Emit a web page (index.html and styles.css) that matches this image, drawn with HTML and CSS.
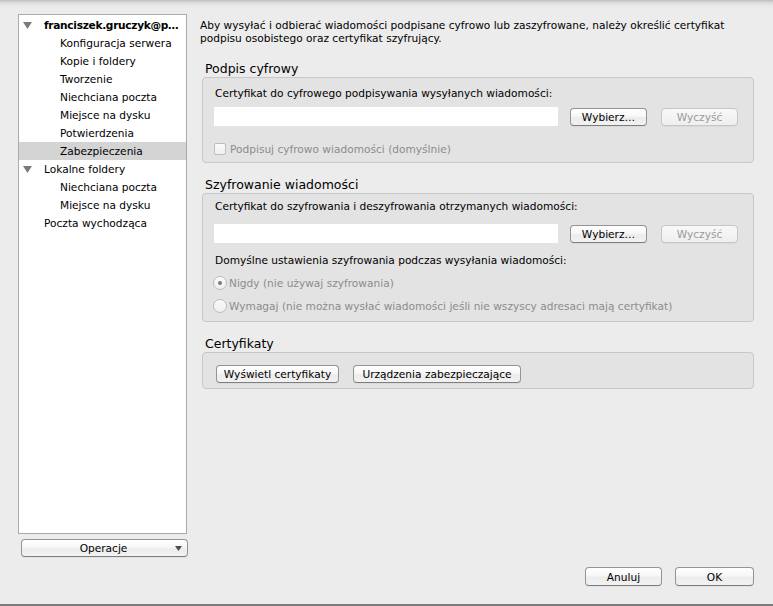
FILE: index.html
```html
<!DOCTYPE html>
<html lang="pl">
<head>
<meta charset="utf-8">
<title>Zabezpieczenia</title>
<link rel="stylesheet" href="styles.css">
</head>
<body>
<div class="window">
  <aside class="sidebar">
    <ul class="tree">
      <li class="row top strong"><svg class="disclosure" width="9" height="7" viewBox="0 0 9 7"><polygon points="0,0 9,0 4.5,7"/></svg><span>franciszek.gruczyk@p…</span></li>
      <li class="row child">Konfiguracja serwera</li>
      <li class="row child">Kopie i foldery</li>
      <li class="row child">Tworzenie</li>
      <li class="row child">Niechciana poczta</li>
      <li class="row child">Miejsce na dysku</li>
      <li class="row child">Potwierdzenia</li>
      <li class="row child selected">Zabezpieczenia</li>
      <li class="row top"><svg class="disclosure" width="9" height="7" viewBox="0 0 9 7"><polygon points="0,0 9,0 4.5,7"/></svg><span>Lokalne foldery</span></li>
      <li class="row child">Niechciana poczta</li>
      <li class="row child">Miejsce na dysku</li>
      <li class="row top noarrow">Poczta wychodząca</li>
    </ul>
    <button class="btn popup"><span class="popup-label">Operacje</span><svg class="popup-arrow" width="7" height="5" viewBox="0 0 7 5"><polygon points="0,0 7,0 3.5,5"/></svg></button>
  </aside>

  <main class="content">
    <p class="intro">Aby wysyłać i odbierać wiadomości podpisane cyfrowo lub zaszyfrowane, należy określić certyfikat podpisu osobistego oraz certyfikat szyfrujący.</p>

    <section class="group">
      <h2 class="group-title first">Podpis cyfrowy</h2>
      <div class="box box-sign">
        <div class="label">Certyfikat do cyfrowego podpisywania wysyłanych wiadomości:</div>
        <div class="field-row">
          <div class="field"></div>
          <button class="btn choose">Wybierz…</button>
          <button class="btn clear disabled">Wyczyść</button>
        </div>
        <div class="option disabled"><span class="checkbox"></span><span>Podpisuj cyfrowo wiadomości (domyślnie)</span></div>
      </div>
    </section>

    <section class="group">
      <h2 class="group-title">Szyfrowanie wiadomości</h2>
      <div class="box box-encrypt">
        <div class="label">Certyfikat do szyfrowania i deszyfrowania otrzymanych wiadomości:</div>
        <div class="field-row">
          <div class="field"></div>
          <button class="btn choose">Wybierz…</button>
          <button class="btn clear disabled">Wyczyść</button>
        </div>
        <div class="label sub">Domyślne ustawienia szyfrowania podczas wysyłania wiadomości:</div>
        <div class="option disabled radio-row"><span class="radio checked"></span><span>Nigdy (nie używaj szyfrowania)</span></div>
        <div class="option disabled radio-row"><span class="radio"></span><span>Wymagaj (nie można wysłać wiadomości jeśli nie wszyscy adresaci mają certyfikat)</span></div>
      </div>
    </section>

    <section class="group">
      <h2 class="group-title">Certyfikaty</h2>
      <div class="box box-certs">
        <button class="btn view">Wyświetl certyfikaty</button>
        <button class="btn devices">Urządzenia zabezpieczające</button>
      </div>
    </section>

    <div class="footer">
      <button class="btn cancel">Anuluj</button>
      <button class="btn ok">OK</button>
    </div>
  </main>
</div>
</body>
</html>
```

FILE: styles.css
```css
* {
  box-sizing: border-box;
}

html,
body {
  margin: 0;
  padding: 0;
}

body {
  width: 773px;
  height: 606px;
  overflow: hidden;
  background: #ececec;
  color: #000;
  font-family: "DejaVu Sans", "Noto Sans", sans-serif;
  font-size: 10.6px;
}

.window {
  height: 606px;
  display: flex;
  gap: 12px;
  padding: 14px 19px 18px 18px;
  background: linear-gradient(#bdbdbd 0, #dedede 3px, #e9e9e9 6px, #ececec 9px);
  border-bottom: 2px solid #7c7c7c;
}

/* Sidebar */
.sidebar {
  width: 170px;
  flex: none;
  display: flex;
  flex-direction: column;
  gap: 5px;
}

.tree {
  list-style: none;
  margin: 0;
  width: 169px;
  height: 520px;
  padding: 1px 0;
  background: #fff;
  border: 1px solid #aaaaaa;
}

.row {
  height: 18px;
  display: flex;
  align-items: center;
  white-space: nowrap;
}

.row.top {
  padding-left: 4px;
}

.row.top .disclosure {
  margin-right: 12px;
  fill: #7b7b7b;
  flex: none;
}

.row.top.noarrow {
  padding-left: 25px;
}

.row.strong {
  font-weight: bold;
  letter-spacing: -0.3px;
}

.row.child {
  padding-left: 41px;
}

.row.selected {
  background: #d4d4d4;
}

/* Buttons */
.btn {
  height: 18px;
  padding: 0;
  margin: 0;
  font: inherit;
  color: #000;
  border: 1px solid #949494;
  border-bottom-color: #7e7e7e;
  border-radius: 4px;
  background: linear-gradient(#ffffff 0%, #f7f7f7 45%, #ececec 55%, #f2f2f2 100%);
  box-shadow: 0 1px 0 rgba(0, 0, 0, 0.04);
  text-align: center;
  white-space: nowrap;
}

.btn.disabled {
  color: #9a9a9a;
  border-color: #c6c6c6;
  background: linear-gradient(#f8f8f8, #efefef);
}

.popup {
  margin-left: 3px;
  width: 167px;
  display: flex;
  align-items: center;
  padding: 0 5px 0 0;
}

.popup-label {
  flex: 1;
  text-align: center;
  padding-left: 10px;
}

.popup-arrow {
  fill: #4e4e4e;
  flex: none;
}

/* Content */
.content {
  flex: 1;
  display: flex;
  flex-direction: column;
}

.intro {
  margin: 5px 0 0;
  line-height: 13px;
}

.group-title {
  margin: 14px 0 1px 5px;
  font-size: 12.5px;
  font-weight: normal;
  line-height: 15px;
}

.group-title.first {
  margin-top: 16px;
}

.box {
  margin-left: 2px;
  border: 1px solid #c7c7c7;
  border-radius: 4px;
  background: #e3e3e3;
}

.label {
  line-height: 13px;
  padding-left: 1px;
}

.field-row {
  display: flex;
  align-items: center;
  height: 19px;
}

.field {
  flex: 1;
  height: 19px;
  background: #fff;
}

.choose {
  width: 77px;
  margin-left: 12px;
}

.clear {
  width: 77px;
  margin-left: 14px;
}

.option {
  display: flex;
  align-items: center;
  height: 14px;
  white-space: nowrap;
}

.option.disabled {
  color: #8c8c8c;
}

.checkbox {
  width: 12px;
  height: 12px;
  margin-right: 4px;
  border: 1px solid #bdbdbd;
  border-radius: 2px;
  background: linear-gradient(#fbfbfb, #efefef);
  flex: none;
}

.radio {
  width: 14px;
  height: 14px;
  margin-left: -1px;
  margin-right: 2px;
  border: 1px solid #bcbcbc;
  border-radius: 50%;
  background: linear-gradient(#fbfbfb, #eeeeee);
  flex: none;
  display: flex;
  align-items: center;
  justify-content: center;
}

.radio.checked::after {
  content: "";
  width: 4px;
  height: 4px;
  border-radius: 50%;
  background: #7a7a7a;
}

/* Signing box */
.box-sign {
  height: 86px;
  padding: 9px 15px 0 11px;
}

.box-sign .field-row {
  margin-top: 7px;
}

.box-sign .option {
  margin-top: 16px;
}

/* Encryption box */
.box-encrypt {
  height: 129px;
  padding: 6px 15px 0 11px;
}

.box-encrypt .field-row {
  margin-top: 11px;
}

.box-encrypt .label.sub {
  margin-top: 11px;
}

.box-encrypt .radio-row {
  margin-top: 9px;
}

/* Certificates box */
.box-certs {
  height: 37px;
  display: flex;
  align-items: flex-start;
  gap: 14px;
  padding: 12px 0 0 13px;
}

.view {
  width: 123px;
  height: 18px;
}

.devices {
  width: 168px;
  height: 18px;
}

/* Footer */
.footer {
  margin-top: auto;
  display: flex;
  justify-content: flex-end;
  gap: 13px;
}

.cancel {
  width: 77px;
  height: 19px;
}

.ok {
  width: 79px;
  height: 19px;
}
```
